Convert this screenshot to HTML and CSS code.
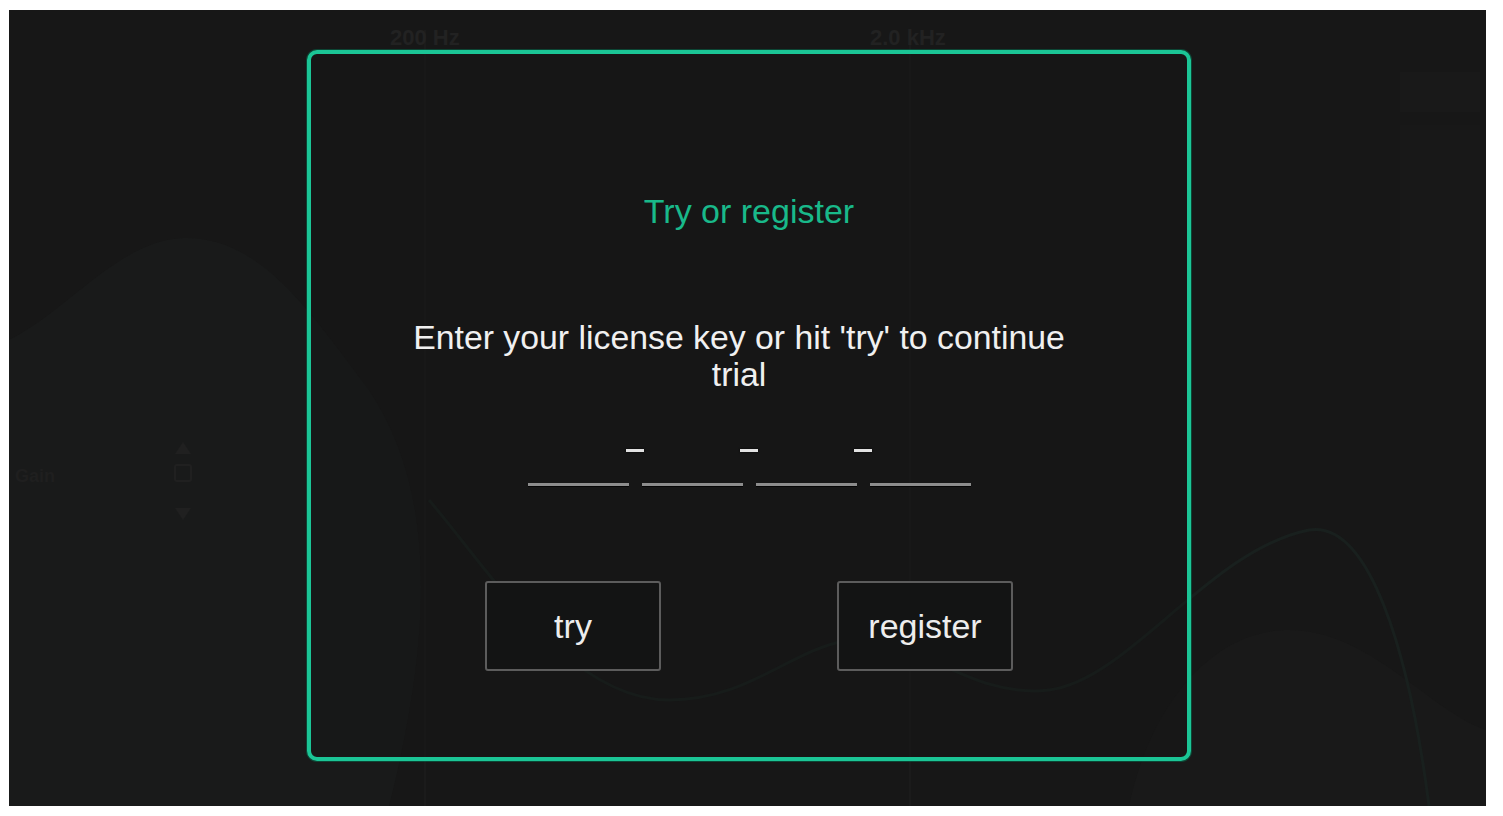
FILE: index.html
```html
<!DOCTYPE html>
<html lang="en">
<head>
    <meta charset="UTF-8">
    <meta name="viewport" content="width=device-width, initial-scale=1.0">
    <title>Try or register</title>
    <link rel="stylesheet" href="styles.css">
</head>
<body>
    <div class="app">
        <!-- plugin view dimmed behind the dialog -->
        <svg class="backdrop" width="1477" height="796" viewBox="0 0 1477 796">
            <path d="M0 330 C 60 300, 110 230, 175 228 C 250 226, 300 300, 360 380 C 420 470, 430 600, 380 796 L 0 796 Z" fill="#191a1a"/>
            <path d="M1120 796 C 1140 700, 1200 620, 1280 620 C 1360 620, 1420 700, 1477 720 L 1477 796 Z" fill="#191919"/>
            <line x1="416" y1="20" x2="416" y2="796" stroke="#1b1b1b" stroke-width="2"/>
            <line x1="901" y1="20" x2="901" y2="796" stroke="#1b1b1b" stroke-width="2"/>
            <text x="381" y="35" class="bg-label">200 Hz</text>
            <text x="861" y="35" class="bg-label">2.0 kHz</text>
            <text x="6" y="472" class="bg-label small">Gain</text>
            <path d="M166 444 L174 432 L182 444 Z" fill="#202020"/>
            <rect x="166" y="455" width="16" height="16" rx="2" fill="none" stroke="#202020" stroke-width="2"/>
            <path d="M166 498 L174 510 L182 498 Z" fill="#202020"/>
            <path d="M420 490 C 480 560, 560 690, 660 690 C 740 690, 780 640, 840 630 C 900 620, 960 690, 1040 680 C 1120 670, 1200 540, 1300 520 C 1360 510, 1400 640, 1420 796" fill="none" stroke="#19201e" stroke-width="3"/>
            <rect x="1391" y="62" width="80" height="40" fill="#191919"/>
            <rect x="1391" y="115" width="80" height="215" fill="#181818"/>
        </svg>

        <div class="dialog">
            <h1 class="dialog-title">Try or register</h1>
            <p class="dialog-text">Enter your license key or hit 'try' to continue trial</p>

            <div class="key-row">
                <input class="key-field" type="text" maxlength="4" aria-label="Key part 1">
                <span class="key-sep"></span>
                <input class="key-field" type="text" maxlength="4" aria-label="Key part 2">
                <span class="key-sep"></span>
                <input class="key-field" type="text" maxlength="4" aria-label="Key part 3">
                <span class="key-sep"></span>
                <input class="key-field" type="text" maxlength="4" aria-label="Key part 4">
            </div>

            <div class="actions">
                <button class="btn">try</button>
                <button class="btn">register</button>
            </div>
        </div>
    </div>
</body>
</html>
```

FILE: styles.css
```css
body {
    margin: 0;
    background-color: #ffffff;
    font-family: "Liberation Sans", Arial, sans-serif;
}
.app {
    position: relative;
    box-sizing: border-box;
    width: 1477px;
    height: 796px;
    margin: 10px 0 0 9px;
    padding: 40px 295px 45px 298px;
    background-color: #171717;
    display: flex;
    overflow: hidden;
}
.backdrop {
    position: absolute;
    left: 0;
    top: 0;
}
.bg-label {
    font-family: "Liberation Sans", Arial, sans-serif;
    font-size: 22px;
    font-weight: bold;
    fill: #222222;
}
.bg-label.small {
    font-size: 18px;
    fill: #1f1f1f;
}
.dialog {
    position: relative;
    flex: 1;
    display: flex;
    flex-direction: column;
    align-items: center;
    border: 4px solid #1bc596;
    border-radius: 10px;
    box-shadow: 0 0 0 1px rgba(8, 90, 66, 0.7);
    background-color: rgba(20, 20, 20, 0.3);
}
.dialog-title {
    margin: 137px 0 0;
    font-size: 34px;
    line-height: 40px;
    font-weight: normal;
    color: #19b98a;
}
.dialog-text {
    max-width: 680px;
    margin: 88px 20px 0 0;
    font-size: 33.8px;
    line-height: 37px;
    text-align: center;
    color: #f0f0f0;
}
.key-row {
    display: flex;
    align-items: flex-start;
    margin-top: 47px;
}
.key-field {
    box-sizing: border-box;
    width: 101px;
    height: 46px;
    padding: 0;
    border: none;
    border-bottom: 3px solid #8d8d8d;
    background: transparent;
    box-shadow: 0 1px 0 #050505;
    color: #f0f0f0;
    font-family: inherit;
    font-size: 24px;
    text-align: center;
    outline: none;
}
.key-sep {
    width: 13px;
    padding-top: 9px;
}
.key-sep::before {
    content: "";
    display: block;
    width: 18px;
    height: 3px;
    margin-left: -2.5px;
    background-color: #e2e2e2;
    box-shadow: 0 0 2px #000;
}
.actions {
    display: flex;
    gap: 176px;
    margin-top: 95px;
}
.btn {
    box-sizing: border-box;
    width: 176px;
    height: 90px;
    border: 2px solid #5c5c5c;
    border-radius: 3px;
    background-color: #131414;
    color: #ededed;
    font-family: inherit;
    font-size: 34px;
    cursor: pointer;
}
```
